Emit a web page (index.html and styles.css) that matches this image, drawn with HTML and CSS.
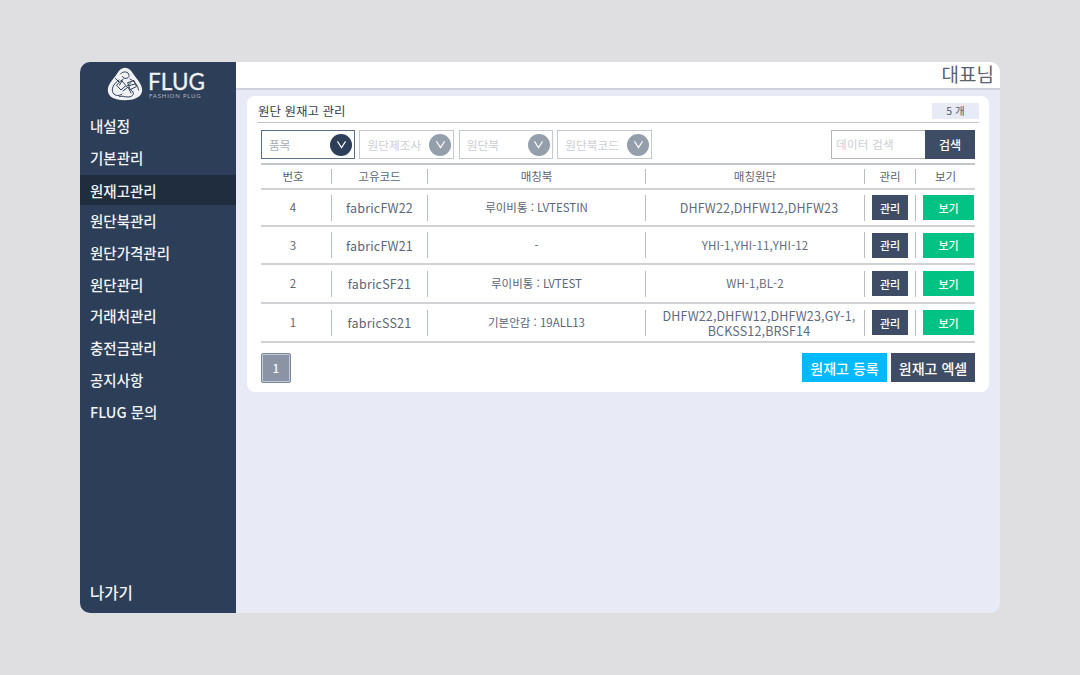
FILE: index.html
```html
<!DOCTYPE html>
<html lang="ko">
<head>
    <meta charset="UTF-8">
    <title>원단 원재고 관리</title>
    <link rel="stylesheet" href="styles.css">
</head>
<body>
    <div class="app">
        <aside class="sidebar">
            <div class="logo">
                <svg class="logo-mark" width="36" height="34" viewBox="0 0 36 34">
                    <path d="M18 .8C21.5 .8 23.8 3 25.8 6.3C28.3 10.4 33.8 15.5 35 21.3C36 27 32 31 25.5 32.4C20 33.5 14.5 33.5 9.5 32.3C3.5 30.8 .2 27 .9 21.8C1.7 16 7.7 10.6 10.3 6.3C12.3 3 14.5 .8 18 .8Z" fill="#f1f2f4"/>
                    <g fill="none" stroke="#2c3e58" stroke-width="1" stroke-linecap="round" stroke-linejoin="round">
                        <path d="M13.5 7C16 3.5 22 4.5 22 8.5C22 12 16.5 12.5 15.5 9.5"/>
                        <path d="M12 13C8 15.5 4.5 20 5.5 24.5C6.5 28.5 11.5 30 15 27"/>
                        <path d="M14.5 13.5L19 18.5L14 23L9.8 18.5Z"/>
                        <path d="M21 15.5L27 13.5L29.5 19.5L23.5 22.5Z"/>
                        <path d="M24 23C28.5 25.5 26.5 30 21 30C17 30 15.5 28.5 12.5 29.5"/>
                        <path d="M16 12L12.5 18M19.5 19.5L24 15.5M22.5 18.5L28 17M23 12C27 14 31 18 31.5 23"/>
                        <path d="M16 24L21 20L24 26M8.5 11.5L12 15"/>
                    </g>
                </svg>
                <div class="logo-text">
                    <span class="logo-name">FLUG</span>
                    <span class="logo-sub">FASHION PLUG</span>
                </div>
            </div>
            <nav class="menu">
                <a class="menu-item">내설정</a>
                <a class="menu-item">기본관리</a>
                <a class="menu-item active">원재고관리</a>
                <a class="menu-item">원단북관리</a>
                <a class="menu-item">원단가격관리</a>
                <a class="menu-item">원단관리</a>
                <a class="menu-item">거래처관리</a>
                <a class="menu-item">충전금관리</a>
                <a class="menu-item">공지사항</a>
                <a class="menu-item">FLUG 문의</a>
            </nav>
            <a class="menu-item exit">나가기</a>
        </aside>

        <div class="main">
            <header class="topbar">대표님</header>
            <div class="content">
                <section class="card">
                    <div class="card-head">
                        <h1>원단 원재고 관리</h1>
                        <span class="count">5 개</span>
                    </div>

                    <div class="filters">
                        <div class="select current w-94">품목<i class="chev"><svg viewBox="0 0 12 10"><path d="M1.5 1.5L6 8.5L10.5 1.5"/></svg></i></div>
                        <div class="select w-95">원단제조사<i class="chev"><svg viewBox="0 0 12 10"><path d="M1.5 1.5L6 8.5L10.5 1.5"/></svg></i></div>
                        <div class="select w-94">원단북<i class="chev"><svg viewBox="0 0 12 10"><path d="M1.5 1.5L6 8.5L10.5 1.5"/></svg></i></div>
                        <div class="select w-95">원단북코드<i class="chev"><svg viewBox="0 0 12 10"><path d="M1.5 1.5L6 8.5L10.5 1.5"/></svg></i></div>
                        <div class="search">
                            <span class="search-input">데이터 검색</span>
                            <button class="search-btn">검색</button>
                        </div>
                    </div>

                    <div class="table">
                        <div class="row head">
                            <div class="cell num">번호</div>
                            <div class="cell">고유코드</div>
                            <div class="cell">매칭북</div>
                            <div class="cell">매칭원단</div>
                            <div class="cell">관리</div>
                            <div class="cell">보기</div>
                        </div>
                        <div class="row">
                            <div class="cell num">4</div>
                            <div class="cell code">fabricFW22</div>
                            <div class="cell">루이비통 : LVTESTIN</div>
                            <div class="cell fabrics">DHFW22,DHFW12,DHFW23</div>
                            <div class="cell"><button class="btn-manage">관리</button></div>
                            <div class="cell"><button class="btn-view">보기</button></div>
                        </div>
                        <div class="row">
                            <div class="cell num">3</div>
                            <div class="cell code">fabricFW21</div>
                            <div class="cell">-</div>
                            <div class="cell fabrics small">YHI-1,YHI-11,YHI-12</div>
                            <div class="cell"><button class="btn-manage">관리</button></div>
                            <div class="cell"><button class="btn-view">보기</button></div>
                        </div>
                        <div class="row">
                            <div class="cell num">2</div>
                            <div class="cell code">fabricSF21</div>
                            <div class="cell">루이비통 : LVTEST</div>
                            <div class="cell fabrics small">WH-1,BL-2</div>
                            <div class="cell"><button class="btn-manage">관리</button></div>
                            <div class="cell"><button class="btn-view">보기</button></div>
                        </div>
                        <div class="row">
                            <div class="cell num">1</div>
                            <div class="cell code">fabricSS21</div>
                            <div class="cell">기본안감 : 19ALL13</div>
                            <div class="cell fabrics">DHFW22,DHFW12,DHFW23,GY-1,<br>BCKSS12,BRSF14</div>
                            <div class="cell"><button class="btn-manage">관리</button></div>
                            <div class="cell"><button class="btn-view">보기</button></div>
                        </div>
                    </div>

                    <div class="card-foot">
                        <button class="page">1</button>
                        <div class="actions">
                            <button class="btn-add">원재고 등록</button>
                            <button class="btn-excel">원재고 엑셀</button>
                        </div>
                    </div>
                </section>
            </div>
        </div>
    </div>
</body>
</html>
```

FILE: styles.css
```css
* {
    box-sizing: border-box;
}

body {
    margin: 0;
    height: 675px;
    padding: 62px 80px;
    overflow: hidden;
    background: #dfdfe1;
    color: #5c6677;
    font-family: "Noto Sans CJK KR", "Noto Sans", sans-serif;
}

button {
    border: none;
    padding: 0;
    font-family: inherit;
    font-weight: 500;
    color: #fff;
}

.app {
    display: flex;
    height: 551px;
    border-radius: 10px;
    overflow: hidden;
    background: #e8eaf6;
}

.sidebar {
    display: flex;
    flex-direction: column;
    width: 156px;
    flex-shrink: 0;
    background: #2c3e58;
}

.logo {
    display: flex;
    align-items: center;
    gap: 5px;
    height: 48px;
    padding: 0 0 4px 27px;
}

.logo-text {
    display: flex;
    flex-direction: column;
    margin-top: 2px;
    color: #f1f2f4;
    font-family: "Lato", sans-serif;
}

.logo-name {
    font-size: 22.5px;
    line-height: 20px;
    letter-spacing: 0.1px;
    -webkit-text-stroke: 0.3px #f1f2f4;
}

.logo-sub {
    font-size: 6px;
    line-height: 7px;
    letter-spacing: 0.8px;
    color: #aeb6c2;
    padding-left: 1px;
}

.menu {
    display: flex;
    flex-direction: column;
    flex: 1;
}

.menu-item {
    display: flex;
    align-items: center;
    height: 31.7px;
    padding-left: 10px;
    color: #f2f3f6;
    font-size: 14.5px;
    font-weight: 500;
}

.menu-item.active {
    height: 29.7px;
    margin-top: 2px;
    background: #1f2d3f;
}

.exit {
    height: 32px;
    margin-bottom: 5px;
    font-size: 15.5px;
}

.main {
    display: flex;
    flex-direction: column;
    flex: 1;
    min-width: 0;
}

.topbar {
    height: 28px;
    padding-right: 6px;
    background: #fff;
    border-bottom: 2px solid #cfd2dc;
    text-align: right;
    font-size: 19px;
    line-height: 23px;
    color: #5a6270;
}

.content {
    flex: 1;
    padding: 6px 11px;
}

.card {
    height: 296px;
    padding: 0 10px;
    background: #fff;
    border-radius: 8px;
}

.card-head {
    display: flex;
    justify-content: space-between;
    align-items: center;
    height: 27px;
    padding-top: 3px;
    border-bottom: 1px solid #c3c5c9;
}

.card-head h1 {
    margin: 0;
    padding-left: 1px;
    font-size: 12.5px;
    font-weight: 400;
    color: #39414e;
}

.count {
    width: 47px;
    height: 16px;
    background: #e8eaf6;
    text-align: center;
    font-size: 10.5px;
    line-height: 16px;
    color: #4d5665;
}

.filters {
    display: flex;
    gap: 4.4px;
    margin: 7px 4px 0;
    padding-bottom: 4px;
    border-bottom: 2px solid #c3c5c9;
}

.select {
    display: flex;
    justify-content: space-between;
    align-items: center;
    height: 29px;
    padding: 0 2px 0 7px;
    border: 1px solid #c5cad2;
    font-size: 11.7px;
    color: #ccced2;
    background: #fff;
}

.select.current {
    border-color: #5d6d85;
    color: #a9adb3;
}

.w-94 {
    width: 94px;
}

.w-95 {
    width: 95px;
}

.chev {
    display: flex;
    align-items: center;
    justify-content: center;
    width: 22px;
    height: 22px;
    border-radius: 50%;
    background: #959eab;
}

.current .chev {
    background: #2c3e58;
}

.chev svg {
    width: 11px;
    height: 9px;
    fill: none;
    stroke: #fff;
    stroke-width: 1.2;
}

.search {
    display: flex;
    margin-left: auto;
    height: 29px;
}

.search-input {
    width: 94px;
    padding-left: 4px;
    border: 1px solid #b4b6ba;
    border-right: none;
    font-size: 11.5px;
    line-height: 26px;
    letter-spacing: 0.3px;
    color: #ccced2;
}

.search-btn {
    width: 50px;
    background: #3f4c65;
    font-size: 12px;
}

.table {
    margin: 0 4px;
}

.row {
    display: grid;
    grid-template-columns: 70px 96px 218px 219px 51px 60px;
    align-items: center;
    min-height: 39px;
    border-bottom: 2px solid #d0d2d5;
    font-size: 11.5px;
}

.row.head {
    min-height: 25px;
    color: #5c6471;
}

.row:nth-child(2) {
    min-height: 37px;
}

.row:nth-child(3) {
    min-height: 38px;
}

.cell {
    display: flex;
    align-items: center;
    justify-content: center;
    height: 26px;
    border-left: 1px solid #b9bcc1;
    text-align: center;
    line-height: 15px;
}

.cell.num {
    padding-right: 6px;
    border-left: none;
}

.head .cell {
    height: 15px;
}

.code {
    font-size: 12.5px;
    letter-spacing: 0.2px;
}

.fabrics {
    padding-left: 8px;
    font-size: 12.5px;
    letter-spacing: 0.15px;
    color: #5f6b80;
}

.fabrics.small {
    padding-left: 0;
    font-size: 11.5px;
}

.btn-manage {
    width: 36px;
    height: 25px;
    background: #3f4c65;
    font-size: 11px;
}

.btn-view {
    width: 51px;
    height: 25px;
    margin-left: 6px;
    background: #00c283;
    font-size: 11px;
}

.card-foot {
    display: flex;
    justify-content: space-between;
    align-items: flex-start;
    margin: 10px 4px 0;
}

.page {
    width: 30px;
    height: 30px;
    background: #8a94a5;
    border: 1px solid #79839a;
    border-radius: 2px;
    box-shadow: inset 0 0 0 1px #c7ccd4;
    font-size: 11px;
}

.actions {
    display: flex;
    gap: 4px;
}

.btn-add,
.btn-excel {
    height: 29px;
    font-size: 14px;
}

.btn-add {
    width: 85px;
    background: #00b9ff;
}

.btn-excel {
    width: 84px;
    background: #3f4c65;
}
```
